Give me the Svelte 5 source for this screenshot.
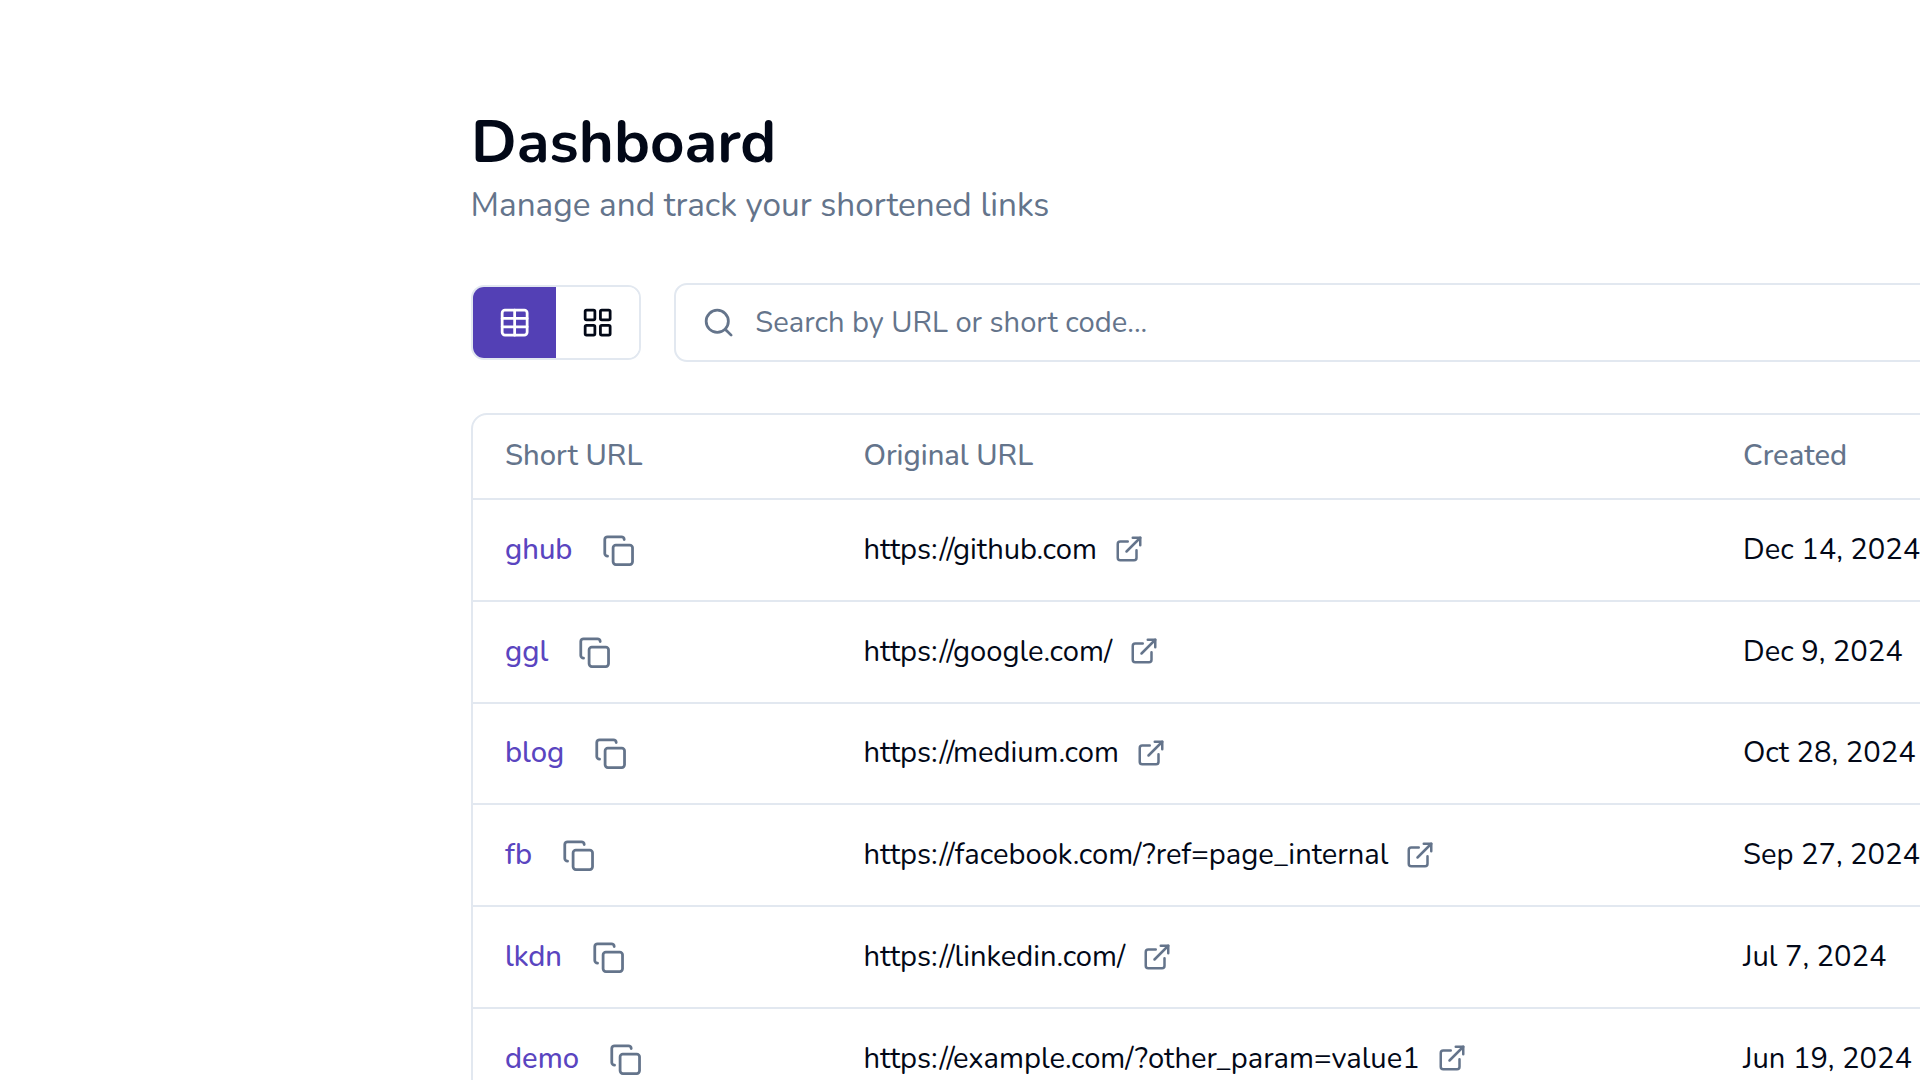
<script>
  const rows = [
    { code: 'ghub', url: 'https://github.com', date: 'Dec 14, 2024' },
    { code: 'ggl', url: 'https://google.com/', date: 'Dec 9, 2024' },
    { code: 'blog', url: 'https://medium.com', date: 'Oct 28, 2024' },
    { code: 'fb', url: 'https://facebook.com/?ref=page_internal', date: 'Sep 27, 2024' },
    { code: 'lkdn', url: 'https://linkedin.com/', date: 'Jul 7, 2024' },
    { code: 'demo', url: 'https://example.com/?other_param=value1', date: 'Jun 19, 2024' }
  ];
</script>

<main class="page">
  <h1>Dashboard</h1>
  <p class="sub">Manage and track your shortened links</p>

  <div class="toolbar">
    <div class="toggle">
      <button class="tbtn active" aria-label="Table view">
        <svg viewBox="0 0 24 24" width="33.3" height="33.3" fill="none" stroke="currentColor" stroke-width="2" stroke-linecap="round" stroke-linejoin="round"><rect x="3" y="3" width="18" height="18" rx="2"/><path d="M3 9h18M3 15h18M12 3v18"/></svg>
      </button>
      <button class="tbtn" aria-label="Grid view">
        <svg viewBox="0 0 24 24" width="33.3" height="33.3" fill="none" stroke="currentColor" stroke-width="2" stroke-linecap="round" stroke-linejoin="round"><rect x="3" y="3" width="7" height="7" rx="1"/><rect x="14" y="3" width="7" height="7" rx="1"/><rect x="3" y="14" width="7" height="7" rx="1"/><rect x="14" y="14" width="7" height="7" rx="1"/></svg>
      </button>
    </div>
    <div class="search">
      <svg viewBox="0 0 24 24" width="33.3" height="33.3" fill="none" stroke="currentColor" stroke-width="2" stroke-linecap="round" stroke-linejoin="round"><circle cx="11" cy="11" r="8"/><path d="m21 21-4.3-4.3"/></svg>
      <span>Search by URL or short code...</span>
    </div>
  </div>

  <div class="card">
    <table>
      <colgroup><col class="c1" /><col class="c2" /><col class="c3" /></colgroup>
      <thead>
        <tr><th>Short URL</th><th>Original URL</th><th>Created</th></tr>
      </thead>
      <tbody>
        {#each rows as r}
          <tr>
            <td>
              <div class="cell">
                <a class="code" href="#top">{r.code}</a>
                <svg class="copy" viewBox="0 0 24 24" width="33.3" height="33.3" fill="none" stroke="currentColor" stroke-width="2" stroke-linecap="round" stroke-linejoin="round"><rect x="8" y="8" width="14" height="14" rx="2"/><path d="M4 16c-1.100 0-2-.9-2-2V4c0-1.100.9-2 2-2h10c1.100 0 2 .9 2 2"/></svg>
              </div>
            </td>
            <td>
              <div class="cell">
                <span>{r.url}</span>
                <svg class="ext" viewBox="0 0 24 24" width="30" height="30" fill="none" stroke="currentColor" stroke-width="2" stroke-linecap="round" stroke-linejoin="round"><path d="M18 13v6a2 2 0 0 1-2 2H5a2 2 0 0 1-2-2V8a2 2 0 0 1 2-2h6"/><path d="M15 3h6v6"/><path d="M10 14 21 3"/></svg>
              </div>
            </td>
            <td>{r.date}</td>
          </tr>
        {/each}
      </tbody>
    </table>
  </div>
</main>

<style>
  :global(html), :global(body) { margin: 0; height: 1080px; overflow: hidden; background: #fff; }
  .page {
    width: 1920px; height: 1080px; box-sizing: border-box; overflow: hidden;
    padding: 105px 0 0 471px;
    font-family: "Nunito", "Noto Sans", Lato, sans-serif;
    color: #0f172a;
  }
  h1 { margin: 0; font-size: 60px; line-height: 75px; font-weight: 700; color: #020817; }
  .sub { margin: 0; font-size: 33.33px; line-height: 50px; color: #64748b; margin-left: -0.5px; }
  .toolbar { display: flex; gap: 33px; margin-top: 53px; align-items: center; width: 1700px; }
  .toggle { display: flex; width: 170px; height: 75px; box-sizing: border-box; border: 2px solid #e2e8f0; border-radius: 13px; overflow: hidden; flex: none; }
  .tbtn { width: 83px; border: 0; padding: 0; background: #fff; color: #020817; display: grid; place-items: center; }
  .tbtn.active { background: #5340b5; color: #fff; }
  .search { flex: 1; height: 79px; box-sizing: border-box; border: 2px solid #e2e8f0; border-radius: 13px; display: flex; align-items: center; gap: 20px; padding-left: 26px; color: #64748b; font-size: 29.17px; }
  .card { margin-top: 51px; width: 1700px; border: 2px solid #e2e8f0; border-radius: 16px; }
  table { border-collapse: separate; border-spacing: 0; table-layout: fixed; width: 100%; }
  .c1 { width: 358.5px; } .c2 { width: 879.5px; }
  th { box-sizing: border-box; height: 85px; padding: 0 0 2px 32px; text-align: left; font-weight: 500; font-size: 29.17px; color: #64748b; border-bottom: 2px solid #e2e8f0; }
  td { box-sizing: border-box; height: 101.8px; padding: 0 0 1px 32px; font-size: 29.17px; color: #020817; border-bottom: 2px solid #e2e8f0; }
  .cell { display: flex; align-items: center; gap: 17px; }
  .code { color: #5a45c0; text-decoration: none; font-weight: 500; }
  .copy { color: #64748b; margin-left: 13px; margin-top: 2px; }
  .ext { color: #64748b; }
</style>
